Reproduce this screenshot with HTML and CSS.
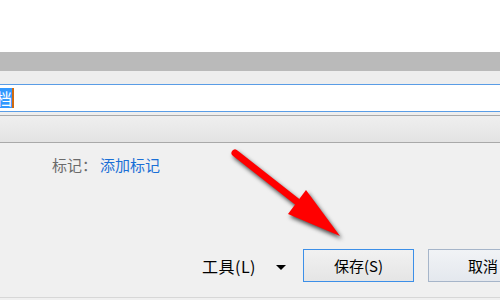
FILE: index.html
```html
<!DOCTYPE html>
<html>
	<head>
		<meta charset="utf-8">
		<link rel="stylesheet" href="styles.css">
	</head>
	<body>
		<div class="page">
			<div class="blank"></div>
			<div class="titlebar"></div>
			<div class="strip"></div>

			<div class="name-row">
				<span class="sel">档</span><span class="caret"></span>
			</div>

			<div class="gap"></div>
			<div class="toolbar"></div>

			<div class="panel">
				<div class="tags">
					<span class="tags-label">标记：</span><a href="#" class="tags-link">添加标记</a>
				</div>

				<div class="footer">
					<span class="tools">工具(L)</span>
					<span class="drop"></span>
					<button class="btn btn-save">保存(S)</button>
					<button class="btn btn-cancel">取消</button>
				</div>
			</div>
			<div class="bottom"></div>

			<svg class="arrow" width="500" height="300" viewBox="0 0 500 300">
				<g class="arrow-shape">
					<line x1="235" y1="153" x2="300" y2="204" stroke="#ff0000" stroke-width="7" stroke-linecap="round"/>
					<polygon points="306,190 288,214 340,236" fill="#ff0000"/>
				</g>
			</svg>
		</div>
	</body>
</html>
```

FILE: styles.css
```css
html, body {
	margin: 0;
	padding: 0;
}
body {
	font-family: "Noto Sans CJK SC", "Noto Sans", sans-serif;
	font-size: 15px;
	color: #000;
	background: #fff;
	width: 500px;
	height: 300px;
	overflow: hidden;
}
.page {
	position: relative;
	width: 500px;
	height: 300px;
	overflow: hidden;
}

.blank {
	height: 52px;
	background: #fff;
}
.titlebar {
	height: 19px;
	background: #bababa;
}
.strip {
	height: 13px;
	background: #eeeeee;
}

.name-row {
	height: 26px;
	border-top: 1px solid #5a9de6;
	border-bottom: 1px solid #5a9de6;
	background: #fff;
	display: flex;
	align-items: center;
	overflow: hidden;
}
.sel {
	display: block;
	height: 20px;
	line-height: 20px;
	width: 12px;
	overflow: hidden;
	direction: rtl;
	background: #3399ff;
	color: #fff;
	font-size: 16px;
}
.caret {
	display: block;
	width: 2px;
	height: 20px;
	background: #d06a10;
}

.gap {
	height: 3px;
	background: #eeeeee;
}
.toolbar {
	height: 26px;
	border-top: 1px solid #a9a9a9;
	border-bottom: 1px solid #a9a9a9;
	background: linear-gradient(#efefef, #e3e3e3);
}

.panel {
	height: 154px;
	background: #f0f0f0;
	display: flex;
	flex-direction: column;
}
.tags {
	padding: 12px 0 0 52px;
	height: 20px;
	line-height: 20px;
	font-size: 15px;
	white-space: nowrap;
}
.tags-label {
	color: #6b6b6b;
	margin-right: 3px;
}
.tags-link {
	color: #1a6fd6;
	text-decoration: none;
}

.footer {
	margin-top: 74px;
	padding-left: 202px;
	display: flex;
	align-items: center;
	height: 33px;
	white-space: nowrap;
}
.tools {
	flex-shrink: 0;
	width: 56px;
	font-size: 16px;
	line-height: 20px;
	letter-spacing: 0.5px;
}
.drop {
	flex-shrink: 0;
	width: 0;
	height: 0;
	border-left: 5px solid transparent;
	border-right: 5px solid transparent;
	border-top: 5px solid #000;
	margin: 4px 17px 0 18px;
}
.btn {
	flex-shrink: 0;
	height: 33px;
	font-family: "Noto Sans CJK SC", "Noto Sans", sans-serif;
	font-size: 15px;
	color: #000;
	padding: 0;
	margin: 0;
}
.btn-save {
	width: 111px;
	border: 1px solid #3c8fe8;
	background: linear-gradient(#f1f1f1, #e5e5e5);
}
.btn-cancel {
	width: 111px;
	margin-left: 14px;
	border: 1px solid #a6b5c9;
	background: linear-gradient(#f1f3f6, #e4e8ee);
	text-align: left;
	padding-left: 39px;
}

.bottom {
	position: absolute;
	left: 0;
	top: 297px;
	width: 500px;
	height: 3px;
	border-top: 1px solid #d7d7d7;
	background: #f0f0f0;
}

.arrow {
	position: absolute;
	left: 0;
	top: 0;
	pointer-events: none;
}
.arrow-shape {
	filter: drop-shadow(2px 3px 2px rgba(0, 0, 0, 0.7));
}
```
